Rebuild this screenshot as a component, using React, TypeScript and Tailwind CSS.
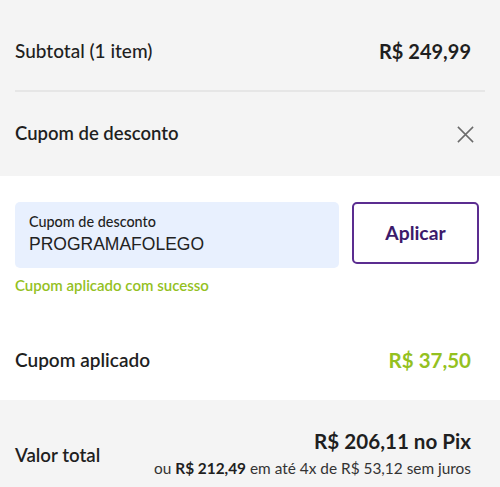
import React from "react";

const FONT = { fontFamily: "Lato, 'Noto Sans', sans-serif" };

export default function App() {
  return (
    <div className="w-[500px] h-[487px] overflow-hidden bg-white text-[#1f1f1f]" style={FONT}>
      {/* subtotal + coupon header */}
      <div className="bg-[#f4f4f4] px-[15px]">
        <div className="flex items-center justify-between h-[92px] pt-[12px] pr-[14px] border-b-2 border-[#e6e6e6]">
          <span className="text-[19px] font-medium">Subtotal (1 item)</span>
          <span className="text-[20px] font-bold">R$ 249,99</span>
        </div>
        <div className="flex items-center justify-between h-[84px] pr-[10px]">
          <span className="text-[18.5px] font-semibold">Cupom de desconto</span>
          <svg width="19" height="19" viewBox="0 0 20 20" fill="none" stroke="#6b6b6b" strokeWidth="1.6">
            <path d="M2 2L18 18M18 2L2 18" />
          </svg>
        </div>
      </div>

      {/* coupon form */}
      <div className="h-[144px] px-[15px] pt-[26px]">
        <div className="flex gap-[13px]">
          <div className="w-[324px] h-[66px] rounded-[5px] bg-[#e8f0fe] px-[14px] pt-[10px]">
            <div className="text-[14.4px] font-medium leading-[20px]">Cupom de desconto</div>
            <div className="text-[17.5px] leading-[25px] text-[#222]" style={{ fontFamily: "'Liberation Sans', Arial, sans-serif" }}>
              PROGRAMAFOLEGO
            </div>
          </div>
          <button type="button" className="w-[127px] h-[62px] rounded-[5px] border-2 border-[#5b2d90] bg-white text-[19.3px] font-bold text-[#3c1a6b]">
            Aplicar
          </button>
        </div>
        <div className="mt-[7px] text-[15px] leading-[20px] font-semibold text-[#94c11f]">Cupom aplicado com sucesso</div>
      </div>

      {/* applied coupon */}
      <div className="flex items-center justify-between h-[80px] px-[15px] pr-[29px]">
        <span className="text-[19px] font-semibold">Cupom aplicado</span>
        <span className="text-[20.5px] font-bold text-[#94c11f]">R$ 37,50</span>
      </div>

      {/* total */}
      <div className="bg-[#f4f4f4] h-[87px] flex items-start justify-between px-[15px] pr-[29px] pt-[27px]">
        <span className="text-[18.7px] leading-[24px] font-semibold pt-[16px]">Valor total</span>
        <div className="text-right">
          <div className="text-[20.6px] font-bold leading-[28px]">R$ 206,11 no Pix</div>
          <div className="mt-[3px] text-[15.4px] leading-[20px] text-[#333]">
            ou <span className="font-bold text-[#1f1f1f]">R$ 212,49</span> em até 4x de R$ 53,12 sem juros
          </div>
        </div>
      </div>
    </div>
  );
}
